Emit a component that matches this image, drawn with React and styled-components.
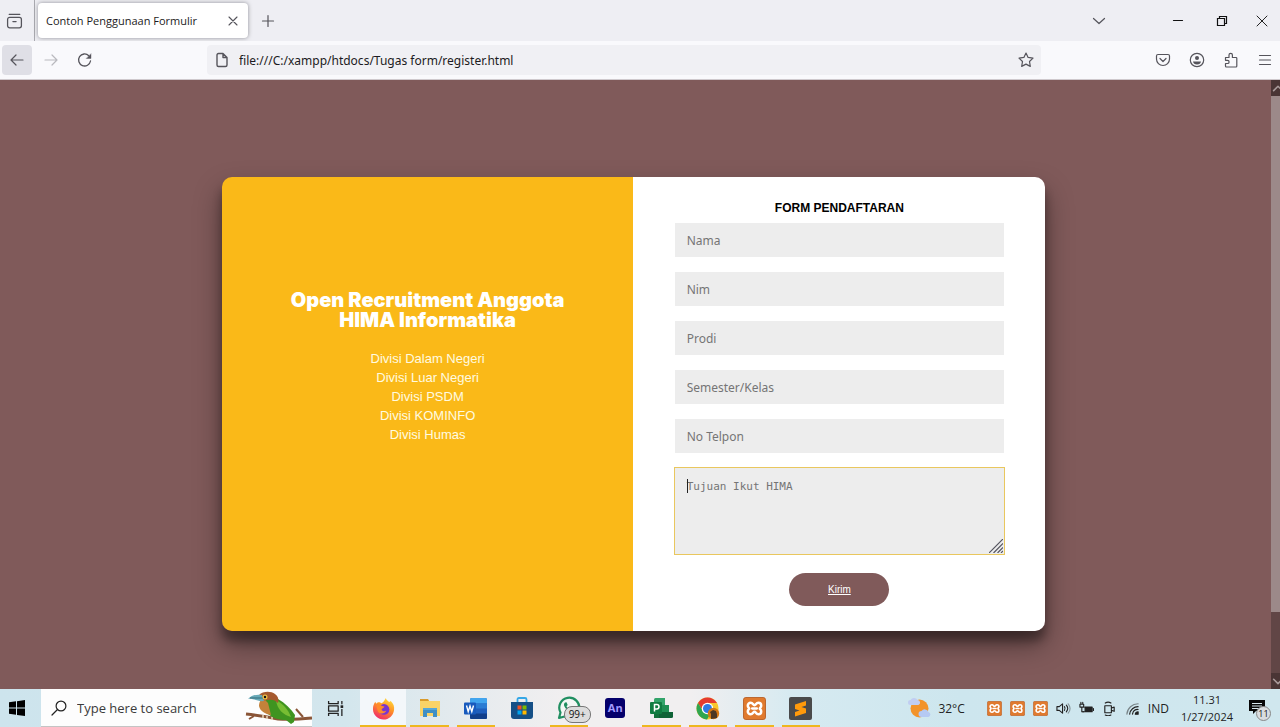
import React from "react";
import styled, { createGlobalStyle, css } from "styled-components";

const ui = `"Open Sans", "Noto Sans", sans-serif`;
const arial = `"Liberation Sans", Arial, sans-serif`;

const Global = createGlobalStyle`
  *, *::before, *::after { box-sizing: border-box; }
  body { margin: 0; background: #805a5a; font-family: ${ui}; }
  button, input, textarea { font: inherit; border: 0; margin: 0; padding: 0; background: none; color: inherit; }
  svg { display: block; flex: none; }
`;

const Screen = styled.div`
  min-height: 100vh;
  display: flex;
  flex-direction: column;
`;

/* Browser chrome */
const TabStrip = styled.header`
  height: 41px;
  display: flex;
  align-items: center;
  background: #eeeef3;
  color: #3c3b42;
`;
const IconButton = styled.button`
  width: ${(p) => p.$w || 30}px;
  height: 30px;
  display: flex;
  align-items: center;
  justify-content: center;
  border-radius: 4px;
  color: ${(p) => (p.$dim ? "#b9b9be" : "#55545b")};
  background: ${(p) => (p.$active ? "#dfdfe6" : "transparent")};
`;
const Divider = styled.span`
  width: 1px;
  height: 100%;
  margin: 0 3px 0 6px;
  background: #a9a9af;
`;
const Tab = styled.div`
  width: 210px;
  height: 35px;
  padding: 0 4px 0 8px;
  display: flex;
  align-items: center;
  justify-content: space-between;
  border-radius: 4px;
  background: #fff;
  box-shadow: 0 0 4px rgba(80, 80, 90, 0.6);
  font-size: 11px;
  color: #1c1b22;
  white-space: nowrap;
`;
const WindowControls = styled.div`
  margin-left: auto;
  display: flex;
  color: #111;
`;
const Toolbar = styled.nav`
  height: 39px;
  padding-left: 2px;
  display: flex;
  align-items: center;
  background: #f9f9fc;
  border-bottom: 1px solid #cfc9cd;
`;
const ButtonGroup = styled.div`
  display: flex;
  gap: 4px;
`;
const Spring = styled.span`
  flex: 107;
`;
const AddressBar = styled.label`
  flex: 834;
  height: 30px;
  display: flex;
  align-items: center;
  border-radius: 4px;
  background: #f0f0f4;
  color: #55545b;
`;
const AddressInput = styled.input`
  flex: 1;
  min-width: 0;
  padding-left: 2px;
  font: 12px "Noto Sans", ${ui};
  color: #1c1b22;
  outline: 0;
`;

/* Web page */
const Viewport = styled.div`
  flex: 1;
  display: flex;
`;
const Page = styled.main`
  flex: 1;
  padding: 97px 4px 57px 0;
  display: flex;
  justify-content: center;
  align-items: flex-start;
  background: #805a5a;
`;
const Card = styled.section`
  width: 65%;
  display: grid;
  grid-template-columns: 1fr 1fr;
  border-radius: 10px;
  overflow: hidden;
  box-shadow: 0 14px 28px rgba(0, 0, 0, 0.4), 0 10px 10px rgba(0, 0, 0, 0.32);
`;
const Intro = styled.div`
  padding: 0 40px 74px;
  display: flex;
  flex-direction: column;
  align-items: center;
  justify-content: center;
  background: #fab918;
  color: #fff;
  text-align: center;
`;
const IntroTitle = styled.h1`
  margin: 0 0 19px;
  font: 900 20px/20px Inter, "Arial Black", ${arial};
`;
const Divisions = styled.ul`
  margin: 0;
  padding: 0;
  list-style: none;
  font: 13px/19px ${arial};
  color: #fffbe0;
`;
const Form = styled.form`
  padding: 23px 10% 25px;
  display: flex;
  flex-direction: column;
  align-items: stretch;
  gap: 15px;
  background: #fff;
`;
const FormTitle = styled.h2`
  margin: 0 0 -8px;
  font: 700 12px/16px ${arial};
  color: #000;
  text-align: center;
`;
const field = css`
  display: block;
  width: 100%;
  padding: 0 12px;
  background: #ededed;
  color: #333;
  &::placeholder { color: #757575; opacity: 1; }
`;
const TextField = styled.input`
  ${field}
  height: 34px;
  font: 12px "Noto Sans", ${ui};
`;
const AreaWrap = styled.div`
  position: relative;
  display: flex;
  outline: 1px solid #e9c75e;
`;
const AreaField = styled.textarea`
  ${field}
  height: 86px;
  padding: 12px;
  font: 11px/14px "DejaVu Sans Mono", monospace;
  resize: none;
  outline: 0;
`;
const Caret = styled.span`
  position: absolute;
  left: 12px;
  top: 11px;
  width: 1px;
  height: 14px;
  background: #222;
`;
const Grip = styled.svg`
  position: absolute;
  right: 1px;
  bottom: 1px;
`;
const Submit = styled.button`
  align-self: center;
  width: 100px;
  height: 33px;
  margin-top: 4px;
  border-radius: 20px;
  background: #805a5a;
  color: #fff;
  font: 10px ${arial};
  text-decoration: underline;
`;

const ScrollTrack = styled.div`
  width: 9px;
  display: flex;
  flex-direction: column;
  background: #614646;
  overflow: hidden;
`;
const ScrollEnd = styled.span`
  height: 16px;
  display: flex;
  align-items: center;
  background: #4a3535;
`;
const Thumb = styled.span`
  flex: 516;
  background: #9c8989;
`;
const TrackRest = styled.span`
  flex: 61;
`;

/* Taskbar */
const Taskbar = styled.footer`
  height: 38px;
  display: flex;
  background: linear-gradient(90deg, #cde4ed 0, #d3e6ed 27%, #e6ebee 37%, #f1eff0 44%, #f1eff0 54%, #d6eaf1 62%, #cde6ee 75%, #d0e7ee 100%);
  color: #222;
`;
const StartButton = styled.button`
  width: 41px;
  padding-left: 9px;
`;
const SearchBox = styled.label`
  width: 271px;
  padding-left: 10px;
  display: flex;
  align-items: center;
  background: #fdfdfd;
  border-bottom: 1px solid #c4c4c4;
`;
const SearchInput = styled.input`
  flex: 1;
  min-width: 0;
  padding-left: 10px;
  font-size: 13px;
  outline: 0;
  &::placeholder { color: #3b3b3b; opacity: 1; }
`;
const TaskView = styled.button`
  width: 48px;
  padding-left: 15px;
`;
const Apps = styled.div`
  flex: 0 1 464px;
  display: flex;
`;
const AppButton = styled.button`
  position: relative;
  flex: 1;
  display: flex;
  align-items: center;
  justify-content: center;
  background: ${(p) => (p.$active ? "#f3f7fa" : "transparent")};
  &::after {
    content: "";
    position: absolute;
    bottom: 0;
    left: ${(p) => (p.$active ? 0 : 4)}px;
    right: ${(p) => (p.$active ? 0 : 4)}px;
    height: ${(p) => (p.$open ? 2 : 0)}px;
    background: #eeb71f;
  }
`;
const CountBadge = styled.span`
  position: absolute;
  left: 18px;
  bottom: 4px;
  padding: 0 4px;
  border: 1px solid #777;
  border-radius: 8px;
  background: #dcdcdc;
  color: #111;
  font: 10px/15px ${ui};
`;
const Tray = styled.div`
  margin-left: auto;
  display: flex;
  align-items: center;
  gap: 8px;
  padding-right: 15px;
  font-size: 12px;
  white-space: nowrap;
`;
const Weather = styled.span`
  display: flex;
  align-items: center;
  gap: 7px;
  margin-right: 14px;
`;
const Clock = styled.time`
  display: flex;
  flex-direction: column;
  align-items: center;
  margin: 0 8px 0 4px;
  font-size: 11px;
  line-height: 17px;
`;
const Notice = styled.button`
  position: relative;
  padding-bottom: 2px;
`;
const NoticeBadge = styled.span`
  position: absolute;
  left: 7px;
  top: 7px;
  width: 15px;
  height: 15px;
  border: 1px solid #888;
  border-radius: 50%;
  background: #d9dde0;
  color: #111;
  font: 9px/13px ${ui};
  text-align: center;
`;

const Line = ({ size = 16, w = 1.2, children, ...rest }) => (
  <svg width={size} height={size} viewBox="0 0 16 16" fill="none" stroke="currentColor" strokeWidth={w} strokeLinecap="round" strokeLinejoin="round" aria-hidden="true" {...rest}>
    {children}
  </svg>
);

const XamppIcon = ({ size }) => (
  <svg width={size} height={size} viewBox="0 0 24 24" aria-hidden="true">
    <rect x=".5" y=".5" width="23" height="23" rx="2.5" fill="#e07a2e" stroke="#b9622b" />
    <path d="M5 9a3 3 0 0 1 3-3c2.500 0 2.500 2.500 4 2.500S13.500 6 16 6a3 3 0 0 1 3 3c0 2-1.500 2-1.500 3s1.500 1 1.500 3a3 3 0 0 1-3 3c-2.500 0-2.500-2.500-4-2.500S10.500 18 8 18a3 3 0 0 1-3-3c0-2 1.500-2 1.500-3S5 11 5 9Z" fill="none" stroke="#fff" strokeWidth="2.600" />
    <path d="M9.500 12h5" fill="none" stroke="#fff" strokeWidth="2.400" strokeLinecap="round" />
  </svg>
);

const FirefoxIcon = () => (
  <svg width="23" height="23" viewBox="0 0 24 24" aria-hidden="true">
    <defs>
      <linearGradient id="fox" x1=".8" y1="0" x2=".3" y2="1">
        <stop offset="0" stopColor="#ffe13c" /><stop offset=".45" stopColor="#ff9125" /><stop offset="1" stopColor="#f0286c" />
      </linearGradient>
    </defs>
    <path d="M14.500 1c.2 2 2 2.600 3.300 4.200 1-.2 1.400-.6 1.500-1.200C22.500 7 23.500 10 23 13.500 22.300 19.500 17.600 23.500 12 23.500S1 19 1 12.500c0-3 1-5.500 2.500-7.500l.8 2C5.500 5.800 6.500 5.400 8 5.500l2 1C12.500 5.500 13 3 14.500 1Z" fill="url(#fox)" />
    <circle cx="12.500" cy="13" r="5.600" fill="#7a35d0" />
    <path d="M4.500 8.500C7 7.300 9 8 10.500 9.500l2.500.3c-.4 1.700-2.500 1.700-3 3.200.6 1.800 3 2.600 5 1.200-1.500 4-7.500 4-9 .3C5.300 12.500 5 10.500 4.500 8.500Z" fill="#ff8a2a" />
  </svg>
);
const FolderIcon = () => (
  <svg width="22" height="20" viewBox="0 0 22 20" aria-hidden="true">
    <path d="M1 1h8l1 2H21v15H1Z" fill="#f9d367" /><path d="M1 1h8l1 2H1Z" fill="#d99b2b" />
    <path d="M4 10h14v9h-4v-4H8v4H4Z" fill="#3e8fc5" /><path d="M4 10h14v2H4Z" fill="#55a7d8" />
  </svg>
);
const WordIcon = () => (
  <svg width="24" height="21" viewBox="0 0 24 21" aria-hidden="true">
    <rect x="6" width="17" height="21" rx="1.500" fill="#1f5ebc" /><path d="M6 1.500Q6 0 7.500 0h14Q23 0 23 1.500V5.500H6Z" fill="#41a5ee" />
    <path d="M6 5.500h17v5H6Z" fill="#2b7cd3" /><path d="M6 15.500h17v4q0 1.500-1.500 1.500h-14Q6 21 6 19.500Z" fill="#123f8b" />
    <rect y="4.500" width="12" height="12" rx="1" fill="#185abd" />
    <path d="m2.500 7.500 1.700 6 1.800-5.500 1.800 5.500 1.700-6" fill="none" stroke="#fff" strokeWidth="1.400" />
  </svg>
);
const StoreIcon = () => (
  <svg width="22" height="22" viewBox="0 0 22 22" aria-hidden="true">
    <path d="M6.500 6V2.500q0-1.500 1.500-1.500h6q1.500 0 1.500 1.500V6" fill="none" stroke="#35a7e6" strokeWidth="1.800" />
    <path d="M0 5h22v14q0 3-3 3H3q-3 0-3-3Z" fill="#154f86" />
    <path d="M6.500 8.500h4v4h-4Z" fill="#f25022" /><path d="M11.500 8.500h4v4h-4Z" fill="#7fba00" /><path d="M6.500 13.500h4v4h-4Z" fill="#00a4ef" /><path d="M11.500 13.500h4v4h-4Z" fill="#ffb900" />
  </svg>
);
const WhatsappIcon = () => (
  <svg width="24" height="24" viewBox="0 0 24 24" fill="none" aria-hidden="true">
    <path d="M2 22l1.500-5.500A10 10 0 1 1 7.500 20.500Z" fill="#f4f7f5" stroke="#218f61" strokeWidth="2.200" strokeLinejoin="round" />
    <path d="M8 6.500c-2 1.500-.8 4.500 1.700 7s5.500 3.700 7 1.700l.5-1.500-2.800-1.500-1.400 1.500c-1.500-.6-3-2-3.500-3.500L10.700 9 9.500 6.300Z" fill="#218f61" />
  </svg>
);
const AnimateTile = styled.span`
  width: 20px;
  height: 20px;
  border-radius: 3px;
  background: #05006b;
  color: #a49bff;
  font: 700 11px/19px "Open Sans", sans-serif;
  text-align: center;
`;
const ProjectIcon = () => (
  <svg width="24" height="21" viewBox="0 0 24 21" aria-hidden="true">
    <path d="M4 1.500Q4 0 5.500 0H15v7H4Z" fill="#33a46a" /><path d="M10 7h9v7h-9Z" fill="#1f8f53" /><path d="M4 7h7v13H4Z" fill="#13713c" />
    <path d="M9 14h14v4.500q0 1.500-1.500 1.500H9Z" fill="#0f6236" /><rect y="4" width="12" height="12" rx="1" fill="#107c41" />
    <path d="M4.500 13.500v-7h2.300q2.200 0 2.200 2.200t-2.200 2.200H4.500" fill="none" stroke="#fff" strokeWidth="1.500" />
  </svg>
);
const ChromeIcon = () => (
  <svg width="24" height="23" viewBox="0 0 24 23" aria-hidden="true">
    <circle cx="11.500" cy="11.500" r="11" fill="#f8c62e" />
    <path d="M2 6a11 11 0 0 1 19 0H11.500L7 14Z" fill="#e53b30" /><path d="M2 6a11 11 0 0 0 9 16.500L15.500 15 7 14Z" fill="#30a650" />
    <circle cx="11.500" cy="11.500" r="5.800" fill="#fff" /><circle cx="11.500" cy="11.500" r="4.500" fill="#3079e5" />
    <circle cx="17.500" cy="16.500" r="5.700" fill="#d67814" /><path d="M15 22v-5l-1-2 3-2 3 1 1 3v4Z" fill="#4b3724" />
  </svg>
);
const SublimeIcon = () => (
  <svg width="23" height="23" viewBox="0 0 23 23" aria-hidden="true">
    <rect width="23" height="23" rx="2" fill="#4a4a4b" />
    <path d="M17 4v4.500l-4.500 1.500 4.500 1.500V16L6 19.500V15l4.500-1.500L6 12V7.500Z" fill="#ff9a0b" />
  </svg>
);
const BirdIcon = () => (
  <svg width="67" height="36" viewBox="0 0 67 36" aria-hidden="true">
    <path d="M1 24c9 1 22 3 32 5 12 1 24 0 34-1" fill="none" stroke="#8a5537" strokeWidth="3" />
    <path d="M9 26 4 29M58 27 51 19" stroke="#8a5537" strokeWidth="2" />
    <path d="M21 9c4-2 9-3 12 0 7 4 13 10 17 16l-1 7-3 2-5-4c-8 0-15-2-21-9-2-4-1-9 1-12Z" fill="#3f9420" />
    <path d="M31 10c7 4 12 9 15 17-8-2-14-8-15-17Z" fill="#77bd33" />
    <path d="M16 10c2-1 5 0 7 3l3 12c-6-1-11-4-12-9 0-3 1-5 2-6Z" fill="#c4823a" />
    <path d="M14 5c4-4 12-4 16-1 3 2 4 5 3 9-3-3-6-4-10-3l-6 1Z" fill="#a5592e" />
    <path d="M17 5C12 4 7 5 3 9c5-1 10 3 16 2Z" fill="#69aab8" />
    <path d="M18 8 5 8" stroke="#336a78" />
    <circle cx="20" cy="7" r="2.500" fill="#f0c245" /><circle cx="20" cy="7" r="1.200" fill="#111" />
    <path d="M18 25v3M22 26v3M27 27v3" stroke="#e7d7bb" strokeWidth="1.500" />
  </svg>
);
const WeatherIcon = () => (
  <svg width="23" height="22" viewBox="0 0 23 22" aria-hidden="true">
    <circle cx="11.500" cy="11.500" r="9" fill="#f2932a" />
    <path d="M2.500 8a2.500 2.500 0 0 1 0-5 4 4 0 0 1 7 0 2.600 2.600 0 0 1 1 5Z" fill="#c0cdf2" />
    <path d="M13.500 20a3 3 0 0 1 0-6 4 4 0 0 1 7 1 2.600 2.600 0 0 1 0 5Z" fill="#b5c9f3" />
  </svg>
);

const fields = [
  ["nama", "Nama"],
  ["nim", "Nim"],
  ["prodi", "Prodi"],
  ["kelas", "Semester/Kelas"],
  ["telpon", "No Telpon"],
];
const divisions = ["Divisi Dalam Negeri", "Divisi Luar Negeri", "Divisi PSDM", "Divisi KOMINFO", "Divisi Humas"];

function BrowserChrome() {
  return (
    <>
      <TabStrip>
        <IconButton $w={28} aria-label="Firefox View">
          <Line size={17}><rect x="1.500" y="5" width="13" height="10" rx="2" /><path d="M3 2.200h10M6.500 9h3" /></Line>
        </IconButton>
        <Divider />
        <Tab>
          Contoh Penggunaan Formulir
          <IconButton $w={22} aria-label="Close tab"><Line size={16} w={1.100}><path d="m4 4 8 8M12 4l-8 8" /></Line></IconButton>
        </Tab>
        <IconButton $w={40} aria-label="New tab"><Line><path d="M8 2.500v11M2.500 8h11" /></Line></IconButton>
        <WindowControls>
          <IconButton $w={114} aria-label="List all tabs"><Line><path d="m2.500 5.500 5.500 5 5.500-5" /></Line></IconButton>
          <IconButton $w={44} aria-label="Minimize"><Line color="#111"><path d="M3.500 7.500h9" /></Line></IconButton>
          <IconButton $w={44} aria-label="Restore"><Line color="#111"><path d="M3.500 5.500h7v7h-7ZM5.500 5.500v-2h7v7h-2" strokeLinejoin="miter" /></Line></IconButton>
          <IconButton $w={36} aria-label="Close window"><Line color="#222" w={1}><path d="m3 3 10 10M13 3 3 13" /></Line></IconButton>
        </WindowControls>
      </TabStrip>
      <Toolbar>
        <ButtonGroup>
          <IconButton $active aria-label="Back"><Line><path d="M14 8H2M7 3 2 8l5 5" /></Line></IconButton>
          <IconButton $dim aria-label="Forward"><Line><path d="M2 8h12M9 3l5 5-5 5" /></Line></IconButton>
          <IconButton aria-label="Reload"><Line w={1.300}><path d="M13.500 9a6 6 0 1 1-1.700-5.300" /><path d="M14 2v4.500H9.500Z" fill="currentColor" strokeWidth=".4" /></Line></IconButton>
        </ButtonGroup>
        <Spring />
        <AddressBar>
          <IconButton as="span"><Line w={1.400}><path d="M4.500 1.500H9L13 5.500V13q0 1.500-1.500 1.500h-7Q3 14.500 3 13V3Q3 1.500 4.500 1.500ZM9 1.500v4h4" /></Line></IconButton>
          <AddressInput aria-label="Address" defaultValue="file:///C:/xampp/htdocs/Tugas form/register.html" />
          <IconButton type="button" aria-label="Bookmark"><Line><path d="m8 1 2.100 4.400 4.900.7-3.500 3.400.8 4.900L8 12.100l-4.300 2.300.8-4.900L1 6.100l4.900-.7Z" /></Line></IconButton>
        </AddressBar>
        <Spring />
        <ButtonGroup>
          <IconButton aria-label="Save to Pocket"><Line><path d="M3 2.500h10q1.500 0 1.500 1.500v3a6.500 6.500 0 0 1-13 0V4Q1.500 2.500 3 2.500ZM5 6.500l3 3 3-3" /></Line></IconButton>
          <IconButton aria-label="Account"><Line><circle cx="8" cy="8" r="6.700" /><circle cx="8" cy="6" r="2" fill="currentColor" stroke="none" /><path d="M4 9.500h8q-.5 3-4 3t-4-3Z" fill="currentColor" stroke="none" /></Line></IconButton>
          <IconButton aria-label="Extensions"><Line><path d="M2.500 5.500H6V3a1.700 1.700 0 0 1 3.400 0v2.500H13q.8 0 .8.800V14q0 1-.8 1H3.300q-.8 0-.8-1v-2.500H4.500a1.600 1.600 0 0 0 0-3.200h-2Z" /></Line></IconButton>
          <IconButton aria-label="Menu"><Line><path d="M2.500 3.500h11M2.500 8h11M2.500 12.500h11" /></Line></IconButton>
        </ButtonGroup>
      </Toolbar>
    </>
  );
}

function Registration() {
  return (
    <Viewport>
      <Page>
        <Card>
          <Intro>
            <IntroTitle>Open Recruitment Anggota<br />HIMA Informatika</IntroTitle>
            <Divisions>{divisions.map((d) => <li key={d}>{d}</li>)}</Divisions>
          </Intro>
          <Form onSubmit={(e) => e.preventDefault()}>
            <FormTitle>FORM PENDAFTARAN</FormTitle>
            {fields.map(([name, label]) => (
              <TextField key={name} name={name} type="text" placeholder={label} aria-label={label} />
            ))}
            <AreaWrap>
              <AreaField name="tujuan" placeholder="Tujuan Ikut HIMA" aria-label="Tujuan Ikut HIMA" />
              <Caret />
              <Grip width="14" height="14" viewBox="0 0 14 14" stroke="#55555f" strokeWidth="1.200" aria-hidden="true">
                <path d="M0 14 14 0M4.500 14 14 4.500M8.500 14 14 8.500M12 14l2-2" />
              </Grip>
            </AreaWrap>
            <Submit type="submit">Kirim</Submit>
          </Form>
        </Card>
      </Page>
      <ScrollTrack aria-hidden="true">
        <ScrollEnd><Line size={14} w={1.800} color="#a99a9a"><path d="m3 11 5-5 5 5" /></Line></ScrollEnd>
        <Thumb />
        <TrackRest />
        <ScrollEnd><Line size={14} w={1.800} color="#a99a9a"><path d="m3 6 5 5 5-5" /></Line></ScrollEnd>
      </ScrollTrack>
    </Viewport>
  );
}

const apps = [
  { name: "Firefox", icon: <FirefoxIcon />, open: true, active: true },
  { name: "File Explorer", icon: <FolderIcon />, open: true },
  { name: "Word", icon: <WordIcon />, open: true },
  { name: "Microsoft Store", icon: <StoreIcon /> },
  { name: "WhatsApp", icon: <WhatsappIcon />, open: true, badge: "99+" },
  { name: "Animate", icon: <AnimateTile>An</AnimateTile> },
  { name: "Project", icon: <ProjectIcon />, open: true },
  { name: "Chrome", icon: <ChromeIcon />, open: true },
  { name: "XAMPP", icon: <XamppIcon size={23} />, open: true },
  { name: "Sublime Text", icon: <SublimeIcon />, open: true },
];

function WindowsTaskbar() {
  return (
    <Taskbar>
      <StartButton aria-label="Start">
        <svg width="16" height="16" viewBox="0 0 16 16" aria-hidden="true"><path d="M0 2.300 7 1.300V7.500H0ZM8 1.200 16 0v7.500H8ZM0 8.500h7v6.200l-7-1ZM8 8.500h8V16L8 14.900Z" /></svg>
      </StartButton>
      <SearchBox>
        <Line><circle cx="10" cy="6" r="4.900" /><path d="M6.500 9.500 1 15" /></Line>
        <SearchInput placeholder="Type here to search" aria-label="Search" />
        <BirdIcon />
      </SearchBox>
      <TaskView aria-label="Task View">
        <Line size={17} w={1.200} strokeLinecap="butt"><path d="M1.500 1v2.500h9V1M1.500 15v-2.500h9V15M1.500 5.500h9v5h-9ZM14 1v3M14 8.500V15" /><path d="M14 5v2.500" strokeWidth="2.500" /></Line>
      </TaskView>
      <Apps>
        {apps.map((a) => (
          <AppButton key={a.name} aria-label={a.name} $open={a.open} $active={a.active}>
            {a.icon}
            {a.badge && <CountBadge>{a.badge}</CountBadge>}
          </AppButton>
        ))}
      </Apps>
      <Tray>
        <Weather><WeatherIcon />32°C</Weather>
        <XamppIcon size={15} /><XamppIcon size={15} /><XamppIcon size={15} />
        <Line size={15}><path d="M1 6h2.500L7 3v10L3.500 10H1ZM9 6q1.500 2 0 4M11 4.500q3 3.500 0 7" /><path d="M13 3q4 5 0 10" opacity=".4" /></Line>
        <Line size={15}><path d="M6 6.500h8v5H4" /><path d="M6.500 7h7v4h-7Z" fill="currentColor" /><path d="M15.500 8v2M1 3.500v3h4v-3ZM3 6.500v5h2M2 1.500v2M4 1.500v2" /></Line>
        <Line size={15}><path d="M3 5h7v7.500H3ZM10 7.500l3-1v4.500l-3-1M3.500 2.200q3-2 6 0M3.500 15q3 1.500 6 0" /></Line>
        <Line size={15}><path d="M2 14A12 12 0 0 1 14 3" opacity=".5" /><path d="M5 14a9 9 0 0 1 9-8M8 14a6 6 0 0 1 6-5" /><path d="M11 14a3 3 0 0 1 3-2.500V14Z" fill="currentColor" /></Line>
        <span>IND</span>
        <Clock><span>11.31</span><span>1/27/2024</span></Clock>
        <Notice aria-label="Notifications">
          <svg width="16" height="16" viewBox="0 0 16 16" aria-hidden="true"><path d="M0 1h16v11H7l-3 3v-3H0Z" fill="#080808" /><path d="M3 4.500h10M3 7h10M3 9.500h7" stroke="#d6e6ec" /></svg>
          <NoticeBadge>11</NoticeBadge>
        </Notice>
      </Tray>
    </Taskbar>
  );
}

export default function App() {
  return (
    <Screen>
      <Global />
      <BrowserChrome />
      <Registration />
      <WindowsTaskbar />
    </Screen>
  );
}
